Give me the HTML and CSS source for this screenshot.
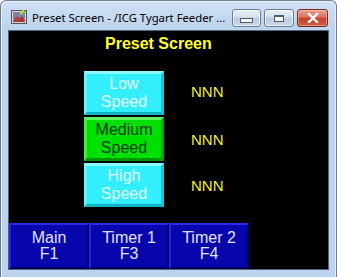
FILE: index.html
```html
<!DOCTYPE html>
<html>
<head>
<meta charset="utf-8">
<link rel="stylesheet" href="styles.css">
</head>
<body>
<div class="window">
  <div class="titlebar">
    <svg class="app-icon" width="16" height="16" viewBox="0 0 16 16">
      <rect x="0.5" y="1.5" width="15" height="13" fill="#d8d8e0" stroke="#555" />
      <rect x="2" y="3" width="12" height="10" fill="#8a7fa8" />
      <path d="M2 13 L5 8 L8 11 L11 7 L14 13 Z" fill="#a03030" />
      <circle cx="6" cy="10" r="2.5" fill="#b04040" />
      <path d="M10 2 L15 2 L12 7 Z" fill="#5cc040" />
      <path d="M9 5 L13 1" stroke="#e8f060" stroke-width="1.2" />
    </svg>
    <div class="title-text">Preset Screen - /ICG Tygart Feeder ...</div>
    <div class="caption-buttons">
      <div class="cap-btn min"><span class="min-glyph"></span></div>
      <div class="cap-btn max"><span class="max-glyph"></span></div>
      <div class="cap-btn close">
        <svg width="12" height="10" viewBox="0 0 12 10">
          <path d="M2 1 L10 9 M10 1 L2 9" stroke="#fff" stroke-width="2.4" stroke-linecap="square" />
        </svg>
      </div>
    </div>
  </div>
  <div class="client">
    <div class="screen-title">Preset Screen</div>
    <div class="rows">
      <div class="row">
        <div class="speed-btn cyan">Low<br>Speed</div>
        <div class="value first">NNN</div>
      </div>
      <div class="row">
        <div class="speed-btn green">Medium<br>Speed</div>
        <div class="value">NNN</div>
      </div>
      <div class="row">
        <div class="speed-btn cyan">High<br>Speed</div>
        <div class="value">NNN</div>
      </div>
    </div>
    <div class="nav">
      <div class="nav-btn">Main<br>F1</div>
      <div class="nav-btn">Timer 1<br>F3</div>
      <div class="nav-btn">Timer 2<br>F4</div>
    </div>
  </div>
</div>
</body>
</html>
```

FILE: styles.css
```css
html, body {
  margin: 0;
  padding: 0;
  background: #ffffff;
}
body {
  width: 337px;
  height: 277px;
  overflow: hidden;
}
.window {
  box-sizing: border-box;
  width: 337px;
  height: 277px;
  border: 1px solid #6e7b8c;
  border-bottom: none;
  border-radius: 6px 6px 0 0;
  background: linear-gradient(to bottom, #cfe0f3 0px, #bcd3ed 30px, #bcd4ee 100%);
  display: flex;
  flex-direction: column;
  box-shadow: inset 1px 1px 0 #e6f0fa, inset -1px 0 0 #e6f0fa;
}
.titlebar {
  height: 29px;
  display: flex;
  align-items: center;
  padding-left: 10px;
  font-family: "Noto Sans", "DejaVu Sans", sans-serif;
}
.app-icon {
  flex: none;
  margin-top: 2px;
}
.title-text {
  flex: 1 1 auto;
  min-width: 0;
  margin-left: 5px;
  font-size: 11.3px;
  color: #000;
  white-space: nowrap;
  overflow: hidden;
  margin-top: 3px;
}
.caption-buttons {
  flex: none;
  margin-left: 6px;
  margin-right: 8px;
  display: flex;
  gap: 3px;
  align-self: flex-start;
  margin-top: 8px;
}
.cap-btn {
  flex: none;
  box-sizing: border-box;
  height: 18px;
  width: 30px;
  border: 1px solid #6a7d96;
  border-radius: 3px;
  background: linear-gradient(to bottom, #e9f0f8 0%, #d5e1ee 45%, #bccbdc 50%, #c9d7e7 100%);
  display: flex;
  align-items: center;
  justify-content: center;
  box-shadow: inset 0 0 0 1px rgba(255,255,255,0.6);
}
.cap-btn.min { width: 29px; }
.cap-btn.close {
  width: 31px;
  border-color: #7a2a22;
  background: linear-gradient(to bottom, #e8a493 0%, #d7725f 45%, #c4412b 50%, #cf5d45 100%);
  box-shadow: inset 0 0 0 1px rgba(255,200,190,0.5);
}
.min-glyph {
  width: 11px;
  height: 3px;
  margin-top: 5px;
  background: #f4f7fb;
  border: 1px solid #4e5c70;
}
.max-glyph {
  width: 8px;
  height: 5px;
  border: 1px solid #4e5c70;
  background: #f4f7fb;
  box-shadow: inset 0 1px 0 #4e5c70;
}
.client {
  flex: 1;
  margin: 0 7px 7px 7px;
  border: 1px solid #51627a;
  background: #000;
  display: flex;
  flex-direction: column;
  font-family: "Liberation Sans", Arial, sans-serif;
}
.screen-title {
  margin-top: 4px;
  margin-left: 96px;
  font-size: 16px;
  line-height: 18px;
  font-weight: bold;
  color: #ffff33;
}
.rows {
  margin-top: 18px;
  margin-left: 75px;
  display: flex;
  flex-direction: column;
  gap: 2px;
}
.row {
  display: flex;
  align-items: center;
}
.speed-btn {
  box-sizing: border-box;
  width: 80px;
  height: 44px;
  border-style: solid;
  border-width: 3px;
  font-size: 16px;
  line-height: 18px;
  text-align: center;
  display: flex;
  align-items: center;
  justify-content: center;
}
.speed-btn.cyan {
  background: #33eefc;
  color: #e4ffff;
  border-color: #8ff8ff #14c8d8 #10b4c4 #66f4ff;
}
.speed-btn.green {
  background: #00e000;
  color: #073807;
  border-color: #66f066 #00a800 #009600 #40ec40;
}
.value {
  margin-left: 27px;
  font-size: 15px;
  color: #f0f02a;
}
.value.first {
  margin-bottom: 4px;
}
.nav {
  margin-top: auto;
  display: flex;
}
.nav-btn {
  box-sizing: border-box;
  width: 80px;
  height: 46px;
  background: #0606ac;
  border-style: solid;
  border-width: 2px;
  border-color: #2a2ae4 #00006a #000060 #2424dc;
  color: #e2e2ee;
  font-size: 16px;
  line-height: 16px;
  text-align: center;
  display: flex;
  align-items: center;
  justify-content: center;
}
```
